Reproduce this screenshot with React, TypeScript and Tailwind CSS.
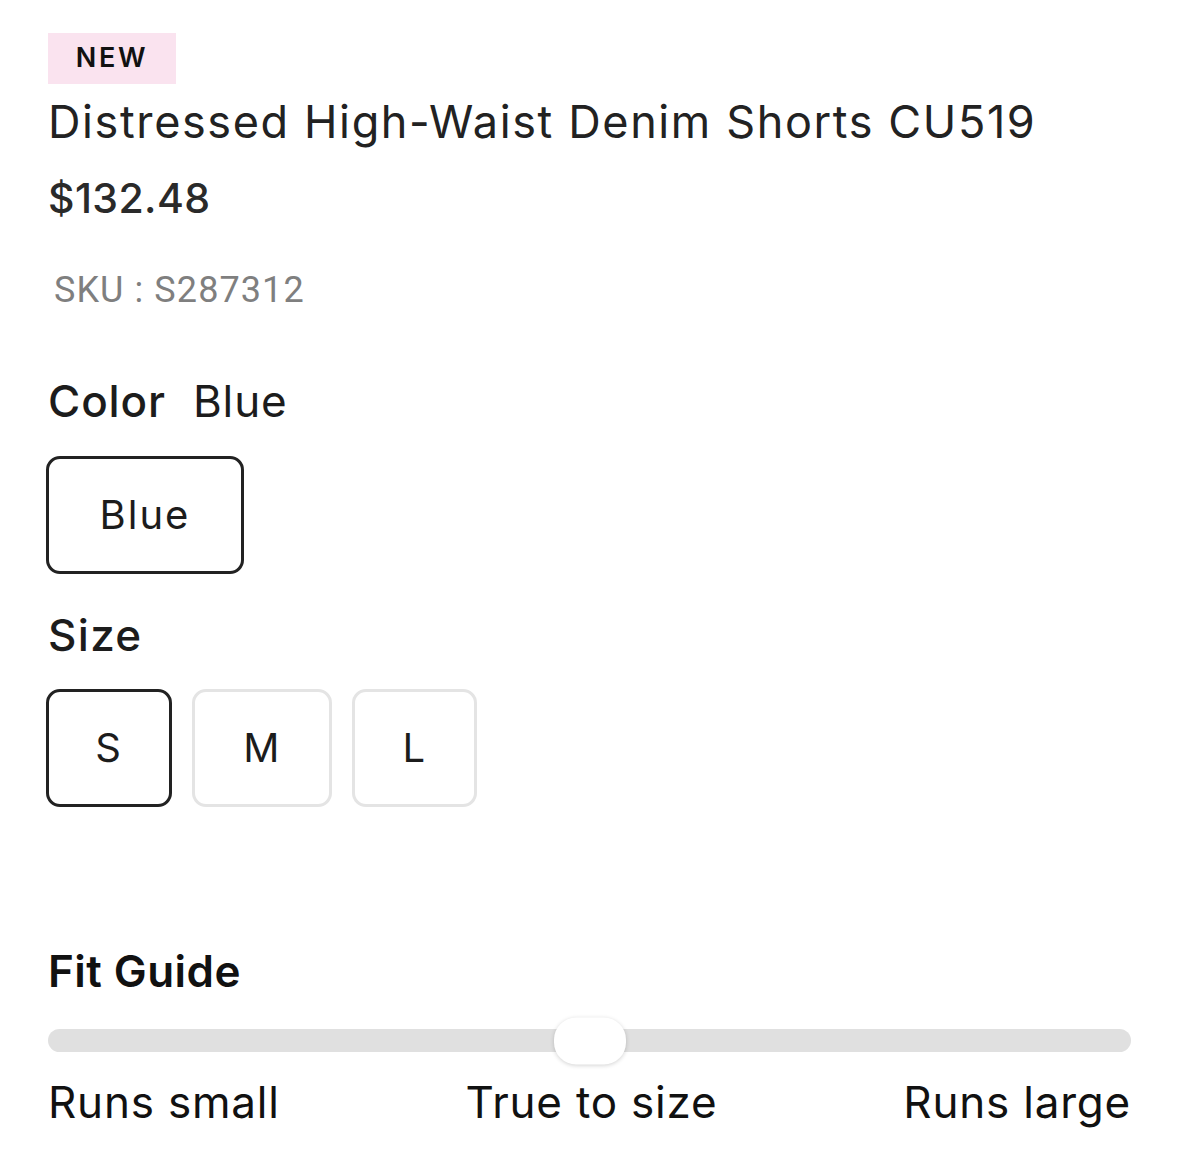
const inter = 'font-["Inter",sans-serif]'

function SizeBox({ label, selected, width }: { label: string; selected?: boolean; width: string }) {
  return (
    <button
      className={`${width} h-[118px] flex items-center justify-center rounded-[14px] border-[3px] bg-white text-[40px] leading-none tracking-[0.04em] text-[#1c1c1c] ${
        selected ? 'border-[#222222]' : 'border-[#e4e4e4]'
      }`}
    >
      {label}
    </button>
  )
}

export default function App() {
  return (
    <div className={`${inter} bg-white min-h-[1166px] pl-[48px] pr-[48px] pt-[33px] text-[#1f1f1f]`}>
      <div className="w-[128px] h-[51px] bg-[#fae3ef] flex items-center justify-center text-[27px] font-semibold tracking-[0.1em] text-[#111]">
        NEW
      </div>

      <h1 className="mt-[11px] text-[45px] leading-[54px] font-normal tracking-[0.036em] text-[#222]">
        Distressed High-Waist Denim Shorts CU519
      </h1>

      <div className="mt-[25px] text-[41px] leading-[49px] font-medium tracking-[0.01em] text-[#2a2a2a]">
        $132.48
      </div>

      <div className='mt-[46px] ml-[6px] font-["Roboto",sans-serif] text-[36px] leading-[43px] tracking-[0.03em] text-[#7f7f7f]'>
        SKU : S287312
      </div>

      <div className="mt-[63px] flex items-baseline gap-[27px] text-[44px] leading-[53px] tracking-[0.02em] text-[#1c1c1c]">
        <span className="font-medium">Color</span>
        <span>Blue</span>
      </div>

      <div className="mt-[28px] -ml-[2px]">
        <button className="w-[198px] h-[118px] flex items-center justify-center rounded-[14px] border-[3px] border-[#222222] bg-white text-[40px] leading-none tracking-[0.05em] text-[#1c1c1c]">
          Blue
        </button>
      </div>

      <div className="mt-[35px] text-[44px] leading-[53px] font-medium tracking-[0.03em] text-[#1c1c1c]">
        Size
      </div>

      <div className="mt-[27px] -ml-[2px] flex gap-[20px]">
        <SizeBox label="S" selected width="w-[126px]" />
        <SizeBox label="M" width="w-[140px]" />
        <SizeBox label="L" width="w-[125px]" />
      </div>

      <div className="mt-[138px] text-[44px] leading-[53px] font-semibold tracking-[0.01em] text-[#111]">
        Fit Guide
      </div>

      <div className="mt-[31px] relative h-[23px] rounded-full bg-[#e0e0e0]">
        <div className="absolute left-1/2 top-1/2 -translate-x-1/2 -translate-y-1/2 w-[72px] h-[47px] rounded-[22px] bg-white shadow-[0_1px_4px_rgba(0,0,0,0.18)]" />
      </div>

      <div className="mt-[24px] flex justify-between text-[44px] leading-[53px] tracking-[0.018em] text-[#111]">
        <span>Runs small</span>
        <span>True to size</span>
        <span>Runs large</span>
      </div>
    </div>
  )
}
